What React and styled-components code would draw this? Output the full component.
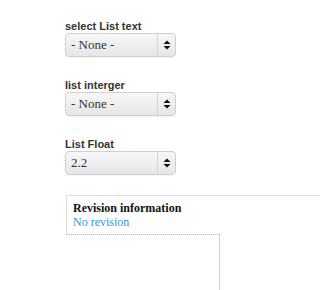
import React from "react";
import styled, { createGlobalStyle } from "styled-components";

const GlobalStyle = createGlobalStyle`
  html, body {
    margin: 0;
    padding: 0;
    background: #fff;
  }
`;

const Page = styled.div`
  padding: 20px 0 0 65px;
  height: 270px;
  overflow: hidden;
  display: flex;
  flex-direction: column;
`;

const FormItem = styled.div`
  margin-bottom: 22px;
`;

const Label = styled.label`
  display: block;
  font-family: "Liberation Sans", Arial, sans-serif;
  font-weight: bold;
  font-size: 11px;
  line-height: 13px;
  color: #333;
`;

const Select = styled.div`
  box-sizing: border-box;
  width: 111px;
  height: 24px;
  display: flex;
  border: 1px solid #cfcfcf;
  border-radius: 4px;
  background: linear-gradient(#f7f7f7, #e6e6e6);
  box-shadow: 0 1px 0 rgba(0, 0, 0, 0.04);
  overflow: hidden;
`;

const Value = styled.span`
  flex: 1;
  padding-left: 5px;
  font-family: "Liberation Serif", "Times New Roman", serif;
  font-size: 13px;
  line-height: 22px;
  color: #333;
`;

const Arrow = styled.span`
  width: 17px;
  border-left: 1px solid #d4d4d4;
  display: flex;
  align-items: center;
  justify-content: center;
`;

const Tabs = styled.div`
  display: flex;
  margin-top: -2px;
  margin-left: 1px;
  flex: 1;
`;

const TabList = styled.div`
  width: 153px;
  flex-shrink: 0;
`;

const TabItem = styled.div`
  position: relative;
  z-index: 1;
  margin-right: -1px;
  background: #fff;
  border-top: 1px solid #dedede;
  border-left: 1px solid #dedede;
  border-bottom: 1px dotted #9fbad3;
  padding: 5px 6px 4px;
  height: 29px;
`;

const TabTitle = styled.strong`
  display: block;
  font-family: "Liberation Serif", "Times New Roman", serif;
  font-size: 12px;
  line-height: 14px;
  color: #111;
`;

const TabSummary = styled.span`
  display: block;
  font-family: "Liberation Serif", "Times New Roman", serif;
  font-size: 12px;
  line-height: 14px;
  color: #3796d4;
`;

const Pane = styled.div`
  flex: 1;
  border-top: 1px solid #dedede;
  border-left: 1px solid #d0d0d0;
`;

const SortIcon = () => (
  <svg width="8" height="10" viewBox="0 0 8 10">
    <path d="M4 0.5 L7.5 4 L0.5 4 Z" fill="#111" />
    <path d="M0.5 6 L7.5 6 L4 9.5 Z" fill="#111" />
  </svg>
);

const fields = [
  { label: "select List text", value: "- None -" },
  { label: "list interger", value: "- None -" },
  { label: "List Float", value: "2.2" },
];

const App = () => {
  return (
    <Page>
      <GlobalStyle />
      {fields.map((f) => (
        <FormItem key={f.label}>
          <Label>{f.label}</Label>
          <Select>
            <Value>{f.value}</Value>
            <Arrow>
              <SortIcon />
            </Arrow>
          </Select>
        </FormItem>
      ))}
      <Tabs>
        <TabList>
          <TabItem>
            <TabTitle>Revision information</TabTitle>
            <TabSummary>No revision</TabSummary>
          </TabItem>
        </TabList>
        <Pane />
      </Tabs>
    </Page>
  );
};

export default App;
